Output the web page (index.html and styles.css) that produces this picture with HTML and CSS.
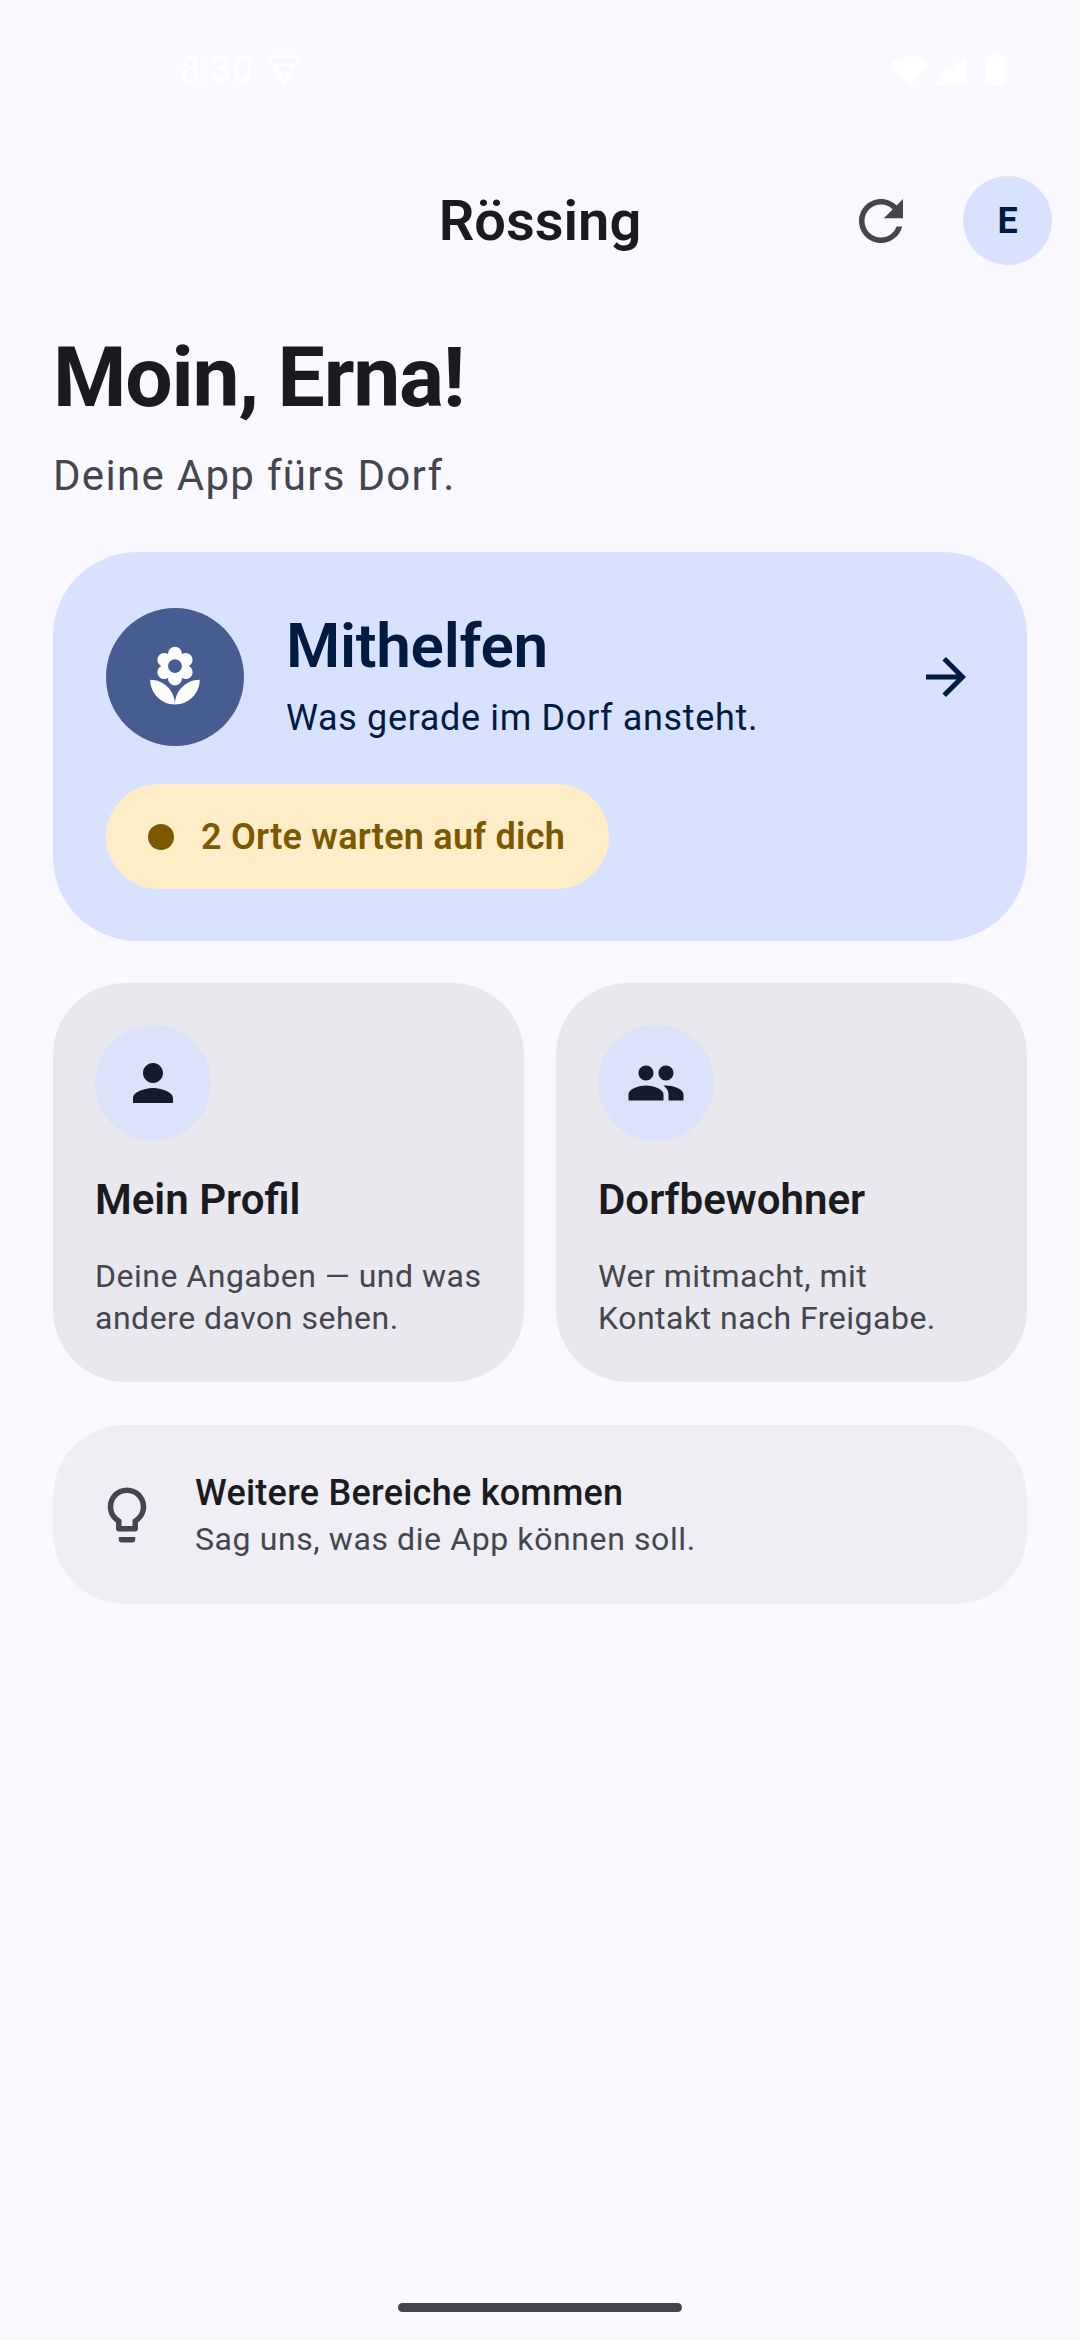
FILE: index.html
```html
<!DOCTYPE html>
<html lang="de">

<head>
  <meta charset="UTF-8">
  <meta name="viewport" content="width=device-width, initial-scale=1.0">
  <title>Rössing</title>
  <link rel="stylesheet" href="styles.css">
</head>

<body>
  <div class="app">
    <div class="status">
      <div class="status-left">
        <span class="clock">8:30</span>
        <svg class="vpn" viewBox="0 0 34 30"><path d="M1 2h32L17 29z" fill="none" stroke="#fff" stroke-width="3" stroke-linejoin="round"/><path d="M7 10h20M12 18h10" stroke="#fff" stroke-width="3"/></svg>
      </div>
      <div class="status-right">
        <svg class="wifi" viewBox="0 0 38 30"><path d="M0 8C10-2 28-2 38 8L19 30z" fill="#fff"/></svg>
        <svg class="signal" viewBox="0 0 32 30"><path d="M32 0v30H0z" fill="#fff"/></svg>
        <svg class="battery" viewBox="0 0 20 32"><path d="M6 0h8v3h6v29H0V3h6z" fill="#fff"/></svg>
      </div>
    </div>

    <header class="top">
      <span></span>
      <div class="top-title">Rössing</div>
      <div class="top-actions">
        <svg class="refresh" viewBox="0 0 24 24"><path d="M17.65 6.35C16.2 4.9 14.21 4 12 4c-4.42 0-7.99 3.58-7.99 8s3.57 8 7.99 8c3.73 0 6.84-2.55 7.73-6h-2.08c-.82 2.33-3.04 4-5.65 4-3.31 0-6-2.69-6-6s2.69-6 6-6c1.66 0 3.14.69 4.22 1.78L13 11h7V4l-2.35 2.35z"/></svg>
        <div class="avatar">E</div>
      </div>
    </header>

    <main class="content">
      <h1 class="hello">Moin, Erna!</h1>
      <p class="lead">Deine App fürs Dorf.</p>

      <section class="hero">
        <div class="hero-row">
          <div class="hero-icon">
            <svg viewBox="0 0 24 24"><path d="M12 22c4.97 0 9-4.03 9-9-4.97 0-9 4.03-9 9zM5.6 10.25c0 1.38 1.12 2.5 2.5 2.5.53 0 1.01-.16 1.42-.44l-.02.19c0 1.38 1.12 2.5 2.5 2.5s2.5-1.12 2.5-2.5l-.02-.19c.4.28.89.44 1.42.44 1.38 0 2.5-1.12 2.5-2.5 0-1-.59-1.85-1.43-2.25.84-.4 1.43-1.25 1.43-2.25 0-1.38-1.12-2.5-2.5-2.5-.53 0-1.01.16-1.42.44l.02-.19C14.5 2.12 13.38 1 12 1S9.5 2.12 9.5 3.5l.02.19c-.4-.28-.89-.44-1.42-.44-1.38 0-2.5 1.12-2.5 2.5 0 1 .59 1.85 1.43 2.25-.84.4-1.43 1.25-1.43 2.25zM12 5.5c1.38 0 2.5 1.12 2.5 2.5s-1.12 2.5-2.5 2.5S9.5 9.38 9.5 8s1.12-2.5 2.5-2.5zM3 13c0 4.97 4.03 9 9 9 0-4.97-4.03-9-9-9z"/></svg>
          </div>
          <div class="hero-text">
            <h2>Mithelfen</h2>
            <p>Was gerade im Dorf ansteht.</p>
          </div>
          <svg class="arrow" viewBox="0 0 24 24"><path d="M12 4l-1.41 1.41L16.17 11H4v2h12.17l-5.58 5.59L12 20l8-8z"/></svg>
        </div>
        <div class="pill"><i class="dot"></i>2 Orte warten auf dich</div>
      </section>

      <div class="tiles">
        <section class="tile">
          <div class="tile-icon">
            <svg viewBox="0 0 24 24"><path d="M12 12c2.21 0 4-1.79 4-4s-1.79-4-4-4-4 1.79-4 4 1.79 4 4 4zm0 2c-2.67 0-8 1.34-8 4v2h16v-2c0-2.66-5.33-4-8-4z"/></svg>
          </div>
          <h3>Mein Profil</h3>
          <p>Deine Angaben — und was andere davon sehen.</p>
        </section>
        <section class="tile">
          <div class="tile-icon">
            <svg viewBox="0 0 24 24"><path d="M16 11c1.66 0 2.99-1.34 2.99-3S17.66 5 16 5c-1.66 0-3 1.34-3 3s1.34 3 3 3zm-8 0c1.66 0 2.99-1.34 2.99-3S9.66 5 8 5C6.34 5 5 6.34 5 8s1.34 3 3 3zm0 2c-2.33 0-7 1.17-7 3.5V19h14v-2.5c0-2.33-4.67-3.5-7-3.5zm8 0c-.29 0-.62.02-.97.05 1.16.84 1.97 1.97 1.97 3.45V19h6v-2.5c0-2.33-4.67-3.5-7-3.5z"/></svg>
          </div>
          <h3>Dorfbewohner</h3>
          <p>Wer mitmacht, mit Kontakt nach Freigabe.</p>
        </section>
      </div>

      <section class="more">
        <svg class="bulb" viewBox="0 0 24 24"><path d="M9 21c0 .5.4 1 1 1h4c.6 0 1-.5 1-1v-1H9v1zm3-19C8.1 2 5 5.1 5 9c0 2.4 1.2 4.5 3 5.7V17c0 .5.4 1 1 1h6c.6 0 1-.5 1-1v-2.3c1.8-1.3 3-3.4 3-5.7 0-3.9-3.1-7-7-7zm2.9 11.1l-.9.6V16h-4v-2.3l-.8-.6C7.8 12.2 7 10.7 7 9c0-2.8 2.2-5 5-5s5 2.2 5 5c0 1.7-.8 3.2-2.1 4.1z"/></svg>
        <div class="more-text">
          <h4>Weitere Bereiche kommen</h4>
          <p>Sag uns, was die App können soll.</p>
        </div>
      </section>
    </main>

    <div class="home-bar"></div>
  </div>
</body>

</html>
```

FILE: styles.css
```css
* {
  margin: 0;
  padding: 0;
  box-sizing: border-box;
}

body {
  background: #f9f9ff;
  font-family: Roboto, "Noto Sans", sans-serif;
  color: #1a1b20;
}

.app {
  display: flex;
  flex-direction: column;
  width: 1080px;
  height: 2340px;
  overflow: hidden;
}

.status {
  display: flex;
  justify-content: space-between;
  align-items: center;
  height: 140px;
  padding: 0 75px 0 180px;
}

.status-left,
.status-right {
  display: flex;
  align-items: center;
}

.clock {
  color: #fff;
  font-size: 36px;
  letter-spacing: 1px;
}

.vpn {
  width: 34px;
  height: 30px;
  margin-left: 14px;
}

.wifi {
  width: 38px;
  height: 30px;
}

.signal {
  width: 32px;
  height: 30px;
  margin-left: 5px;
}

.battery {
  width: 20px;
  height: 32px;
  margin-left: 19px;
}

.top {
  display: grid;
  grid-template-columns: minmax(0, 1fr) auto minmax(0, 1fr);
  align-items: center;
  height: 89px;
  margin-top: 36px;
  padding-left: 28px;
  padding-right: 28px;
}

.top-title {
  font-size: 56px;
  font-weight: 600;
}

.top-actions {
  display: flex;
  justify-content: flex-end;
  align-items: center;
  gap: 49px;
}

.refresh {
  flex: none;
  width: 66px;
  height: 66px;
  fill: #44464f;
}

.avatar {
  display: flex;
  flex: none;
  justify-content: center;
  align-items: center;
  width: 89px;
  height: 89px;
  border-radius: 50%;
  background: #d8e2ff;
  color: #001a42;
  font-size: 36px;
  font-weight: 700;
}

.content {
  display: flex;
  flex-direction: column;
  padding: 0 53px;
}

.hello {
  margin-top: 65px;
  font-size: 84px;
  font-weight: 700;
  line-height: 96px;
  letter-spacing: -1.2px;
}

.lead {
  margin-top: 24px;
  color: #44464f;
  font-size: 42px;
  line-height: 52px;
  letter-spacing: 1.3px;
}

.hero {
  height: 389px;
  margin-top: 50px;
  padding: 56px 52px 0 53px;
  border-radius: 84px;
  background: #d8e2ff;
}

.hero-row {
  display: flex;
  align-items: center;
  height: 138px;
}

.hero-icon {
  display: flex;
  flex: none;
  justify-content: center;
  align-items: center;
  width: 138px;
  height: 138px;
  border-radius: 50%;
  background: #475d92;
}

.hero-icon svg {
  width: 66px;
  height: 66px;
  fill: #fff;
}

.hero-text {
  flex: 1;
  margin-left: 42px;
  padding-bottom: 2px;
}

.hero-text h2 {
  color: #001a42;
  font-size: 62px;
  font-weight: 600;
  line-height: 72px;
  letter-spacing: -0.3px;
}

.hero-text p {
  margin-top: 12px;
  color: #001a42;
  font-size: 36px;
  line-height: 48px;
  letter-spacing: 0.65px;
}

.arrow {
  flex: none;
  width: 60px;
  height: 60px;
  margin-right: -1px;
  fill: #001a42;
}

.pill {
  display: inline-flex;
  align-items: center;
  height: 105px;
  margin-top: 38px;
  padding: 0 44px 0 42px;
  border-radius: 53px;
  background: #ffedc7;
  color: #7c5800;
  font-size: 36px;
  font-weight: 600;
  letter-spacing: 0.25px;
}

.dot {
  width: 26px;
  height: 26px;
  margin-right: 27px;
  border-radius: 50%;
  background: #7c5800;
}

.tiles {
  display: grid;
  grid-template-columns: 1fr 1fr;
  gap: 32px;
  margin-top: 42px;
}

.tile {
  height: 399px;
  padding: 42px;
  border-radius: 72px;
  background: #e8e8ee;
}

.tile-icon {
  display: flex;
  justify-content: center;
  align-items: center;
  width: 116px;
  height: 116px;
  border-radius: 50%;
  background: #dce2f9;
}

.tile-icon svg {
  width: 60px;
  height: 60px;
  fill: #141b2c;
}

.tile h3 {
  margin-top: 32px;
  font-size: 42px;
  font-weight: 600;
  line-height: 54px;
}

.tile p {
  margin-top: 28px;
  color: #44464f;
  font-size: 32px;
  line-height: 42px;
  letter-spacing: 0.5px;
}

.more {
  display: flex;
  align-items: center;
  height: 179px;
  margin-top: 43px;
  padding-left: 41px;
  border-radius: 72px;
  background: #eeeef4;
}

.bulb {
  flex: none;
  width: 66px;
  height: 66px;
  fill: #44464f;
}

.more-text {
  margin-left: 35px;
  padding-top: 2px;
}

.more-text h4 {
  font-size: 36px;
  font-weight: 500;
  line-height: 44px;
  letter-spacing: 0.25px;
}

.more-text p {
  margin-top: 3px;
  color: #44464f;
  font-size: 32px;
  line-height: 42px;
  letter-spacing: 0.6px;
}

.home-bar {
  width: 284px;
  height: 9px;
  margin: auto auto 28px;
  border-radius: 5px;
  background: #44464f;
}
```
